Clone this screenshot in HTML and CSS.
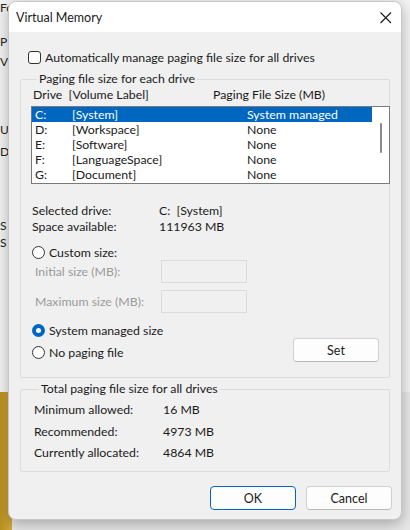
FILE: index.html
```html
<!DOCTYPE html>
<html lang="en">
  <head>
    <meta charset="UTF-8" />
    <title>Virtual Memory</title>
    <link rel="stylesheet" href="styles.css">
  </head>
  <body>
    <!-- window behind the dialog -->
    <div class="backdrop">
      <span class="bg-letter" style="top: 0px">Fo</span>
      <span class="bg-letter" style="top: 34px">P</span>
      <span class="bg-letter" style="top: 54px">V</span>
      <span class="bg-letter" style="top: 122px">U</span>
      <span class="bg-letter" style="top: 144px">D</span>
      <span class="bg-letter" style="top: 218px">S</span>
      <span class="bg-letter" style="top: 235px">S</span>
      <div class="bg-gold"></div>
    </div>

    <div class="dialog">
      <div class="titlebar">
        <span class="title">Virtual Memory</span>
        <svg class="close" width="12" height="12" viewBox="0 0 12 12">
          <path d="M0.5 0.5 L11 11 M11 0.5 L0.5 11" stroke="#1a1a1a" stroke-width="1.1" fill="none" />
        </svg>
      </div>

      <div class="content">
        <label class="check-row">
          <span class="checkbox"></span>
          Automatically manage paging file size for all drives
        </label>

        <fieldset class="group group-drives">
          <legend>Paging file size for each drive</legend>
          <div class="list-head">
            <span class="col-drive">Drive&nbsp; [Volume Label]</span>
            <span class="col-size">Paging File Size (MB)</span>
          </div>
          <div class="listbox">
            <div class="rows">
              <div class="row selected"><span class="c1">C:</span><span class="c2">[System]</span><span class="c3">System managed</span></div>
              <div class="row"><span class="c1">D:</span><span class="c2">[Workspace]</span><span class="c3">None</span></div>
              <div class="row"><span class="c1">E:</span><span class="c2">[Software]</span><span class="c3">None</span></div>
              <div class="row"><span class="c1">F:</span><span class="c2">[LanguageSpace]</span><span class="c3">None</span></div>
              <div class="row"><span class="c1">G:</span><span class="c2">[Document]</span><span class="c3">None</span></div>
            </div>
            <div class="scrollbar"><div class="thumb"></div></div>
          </div>

          <div class="info">
            <span>Selected drive:</span><span>C:&nbsp; [System]</span>
            <span>Space available:</span><span>111963 MB</span>
          </div>

          <label class="radio-row radio-custom">
            <span class="radio"></span>Custom size:
          </label>
          <div class="fields">
            <div class="field">
              <span class="field-label">Initial size (MB):</span>
              <span class="input"></span>
            </div>
            <div class="field">
              <span class="field-label">Maximum size (MB):</span>
              <span class="input"></span>
            </div>
          </div>

          <div class="options">
            <div class="option-list">
              <label class="radio-row">
                <span class="radio checked"></span>System managed size
              </label>
              <label class="radio-row">
                <span class="radio"></span>No paging file
              </label>
            </div>
            <button class="btn btn-set">Set</button>
          </div>
        </fieldset>

        <fieldset class="group group-total">
          <legend>Total paging file size for all drives</legend>
          <div class="totals">
            <span>Minimum allowed:</span><span>16 MB</span>
            <span>Recommended:</span><span>4973 MB</span>
            <span>Currently allocated:</span><span>4864 MB</span>
          </div>
        </fieldset>

        <div class="buttons">
          <button class="btn btn-default">OK</button>
          <button class="btn">Cancel</button>
        </div>
      </div>
    </div>
  </body>
</html>
```

FILE: styles.css
```css
* {
  margin: 0;
  padding: 0;
  box-sizing: border-box;
}

body {
  font-family: Lato, "Liberation Sans", sans-serif;
  font-size: 12.3px;
  color: #1a1a1a;
  background: #e6e6e6;
  width: 410px;
  height: 530px;
  overflow: hidden;
  position: relative;
}

/* window behind */
.backdrop {
  position: absolute;
  top: 0;
  left: 0;
  width: 410px;
  height: 530px;
  background: linear-gradient(#f2f2f2, #f2f2f2) no-repeat 0 0 / 410px 392px;
}

.bg-letter {
  position: absolute;
  left: 0;
  font-size: 12px;
  line-height: 16px;
  color: #222;
}

.bg-gold {
  position: absolute;
  left: 0;
  top: 392px;
  width: 12px;
  height: 138px;
  background: linear-gradient(90deg, #b8901f, #d2a93c);
}

/* dialog */
.dialog {
  position: relative;
  margin: 1px 0 0 8px;
  width: 394px;
  height: 519px;
  background: #f0f0f0;
  border: 1px solid #c8c8c8;
  border-radius: 8px;
  box-shadow: 0 4px 14px rgba(0, 0, 0, 0.28);
  overflow: hidden;
}

.titlebar {
  height: 30px;
  background: #fff;
  display: flex;
  align-items: center;
  justify-content: space-between;
  padding: 0 9px 0 7px;
}

.title {
  font-size: 12.5px;
  margin-top: 1px;
}

.close {
  margin-top: 1px;
}

.content {
  padding: 0 9px 0 11px;
}

.check-row {
  display: flex;
  align-items: center;
  gap: 4px;
  height: 18px;
  margin: 16px 0 0 8px;
}

.checkbox {
  width: 13px;
  height: 13px;
  border: 1px solid #333;
  border-radius: 3px;
  background: #fff;
}

.group {
  border: 1px solid #dcdcdc;
  border-radius: 2px;
  width: 370px;
}

.group legend {
  padding: 0 2px;
  margin-left: 6px;
  line-height: 16px;
}

.group-drives {
  margin-top: 5px;
  height: 307px;
  padding: 0 0 0 10px;
}

.list-head {
  display: flex;
  line-height: 16px;
  padding-left: 2px;
}

.col-drive {
  width: 180px;
}

.listbox {
  margin-top: 3px;
  margin-right: -1px;
  height: 78px;
  border: 1px solid #7a7a7a;
  background: #fff;
  display: flex;
}

.rows {
  flex: 1;
}

.row {
  display: flex;
  height: 15px;
  line-height: 15px;
  padding-left: 3px;
}

.row.selected {
  background: #0067c0;
  color: #fff;
}

.c1 {
  width: 37px;
}

.c2 {
  width: 175px;
}

.scrollbar {
  width: 17px;
  padding: 16px 0 0 8px;
}

.thumb {
  width: 2px;
  height: 30px;
  background: #8a8a8a;
  border-radius: 1px;
}

.info,
.totals {
  display: grid;
  grid-template-columns: 127px auto;
  line-height: 16px;
  margin-top: 19px;
  padding-left: 1px;
}

.radio-row {
  display: flex;
  align-items: center;
  gap: 4px;
  height: 18px;
  padding-left: 1px;
}

.radio-custom {
  margin-top: 8px;
}

.radio {
  width: 13px;
  height: 13px;
  border: 1px solid #333;
  border-radius: 50%;
  background: #fff;
}

.radio.checked {
  border: 4px solid #0067c0;
  background: #fff;
}

.fields {
  display: flex;
  flex-direction: column;
  gap: 7px;
  margin-top: -1px;
}

.field {
  display: flex;
  align-items: center;
  padding-left: 4px;
}

.field-label {
  width: 126px;
  color: #9a9a9a;
}

.input {
  width: 86px;
  height: 23px;
  border: 1px solid #dcdcdc;
  background: #f0f0f0;
}

.options {
  display: flex;
  align-items: flex-end;
  margin-top: 8px;
}

.option-list {
  display: flex;
  flex-direction: column;
  gap: 4px;
  width: 262px;
}

.btn {
  font-family: inherit;
  font-size: 12.5px;
  color: #1a1a1a;
  background: #fdfdfd;
  border: 1px solid #d0d0d0;
  border-bottom-color: #b8b8b8;
  border-radius: 4px;
  width: 86px;
  height: 24px;
}

.btn-set {
  margin-bottom: -1px;
}

.group-total {
  margin-top: 3px;
  height: 91px;
  padding: 0 0 0 12px;
}

.totals {
  margin-top: 5px;
  row-gap: 5.5px;
  grid-template-columns: 129px auto;
}

.buttons {
  display: flex;
  justify-content: flex-end;
  gap: 10px;
  margin-top: 14px;
}

.btn-default {
  border: 1px solid #0067c0;
}
```
